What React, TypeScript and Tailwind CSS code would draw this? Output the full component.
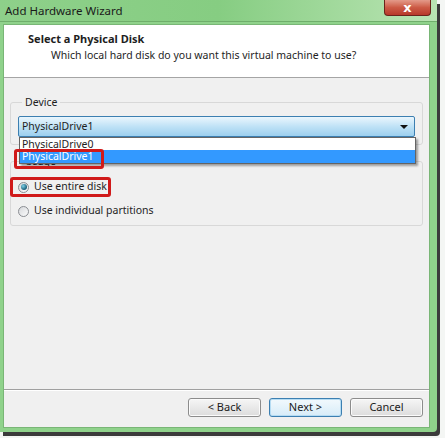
import React from "react";

function Radio({ checked, label }: { checked?: boolean; label: string }) {
  return (
    <div className="flex items-center h-[16px] gap-[5px]">
      <div className="w-[11px] h-[11px] rounded-full border border-[#8a8d92] bg-gradient-to-br from-[#d6d8db] to-[#fbfbfb] flex items-center justify-center">
        {checked && (
          <div className="w-[6px] h-[6px] rounded-full bg-[radial-gradient(circle_at_35%_35%,#7fd0e6,#1a5f7a_70%)]" />
        )}
      </div>
      <span>{label}</span>
    </div>
  );
}

function Button({ label, focused }: { label: string; focused?: boolean }) {
  return (
    <div
      className={`w-[73px] h-[19px] rounded-[3px] border flex items-center justify-center text-[11px] text-[#1b1b1b] ${
        focused
          ? "border-[#3c7fb1] bg-gradient-to-b from-[#f2f9fd] to-[#d7ecf8] shadow-[inset_0_0_0_1px_#b5dcf3]"
          : "border-[#8c8c8c] bg-gradient-to-b from-[#f6f6f6] to-[#dcdcdc] shadow-[inset_0_0_0_1px_#fbfbfb]"
      }`}
    >
      {label}
    </div>
  );
}

export default function App() {
  return (
    <div className="w-[445px] h-[438px] bg-[#f4f6f4] overflow-hidden font-['Noto_Sans',sans-serif] text-[10.5px] text-[#1e1e1e]">
      <div className="w-[437px] h-[432px] flex flex-col bg-[#8fd28b] shadow-[3px_4px_0_#3b3b3b] rounded-br-[4px]">
        {/* title bar */}
        <div className="h-[22px] flex items-start bg-gradient-to-r from-[#8ed08a] via-[#86cd82] to-[#b9e4b3] border-b border-[#6fae6b]">
          <span className="pl-[5px] pt-[3px] text-[11.5px] leading-[16px] text-[#1a1a1a]">
            Add Hardware Wizard
          </span>
          <div className="ml-auto mr-[6px] w-[47px] h-[16px] rounded-b-[4px] border border-t-0 border-[#6b231b] bg-gradient-to-b from-[#e39a8a] via-[#cc5a45] to-[#b7392a] flex items-center justify-center">
            <span className="text-white font-bold text-[13px] leading-none font-['DejaVu_Sans',sans-serif]">x</span>
          </div>
        </div>

        {/* client area */}
        <div className="mt-[2px] ml-[3px] mr-[7px] mb-[4px] flex-1 flex flex-col border border-[#79b676] relative">
          {/* header */}
          <div className="h-[53px] bg-white border-b border-[#a5a5a5] pt-[7px]">
            <div className="pl-[24px] font-bold text-[11px] leading-[14px]">Select a Physical Disk</div>
            <div className="pl-[47px] mt-[2px] leading-[14px]">
              Which local hard disk do you want this virtual machine to use?
            </div>
          </div>

          {/* body */}
          <div className="flex-1 bg-[#f0f0f0] pt-[17px] px-[6px]">
            <fieldset className="border border-[#d8d8d8] rounded-[3px] px-[7px] pt-[7px] pb-[7px]">
              <legend className="ml-[4px] px-[3px] leading-[14px]">Device</legend>
              <div className="h-[21px] rounded-[2px] border border-[#3c7fb1] bg-gradient-to-b from-[#eaf6fd] via-[#bfe2f6] to-[#9ccfee] flex items-center pl-[3px] pr-[6px]">
                <span>PhysicalDrive1</span>
                <div className="ml-auto w-0 h-0 border-l-[4px] border-r-[4px] border-t-[4px] border-l-transparent border-r-transparent border-t-[#111]" />
              </div>
            </fieldset>

            <fieldset className="mt-[9px] border border-[#d8d8d8] rounded-[3px] px-[7px] pt-[11px] pb-[6px]">
              <legend className="ml-[4px] px-[3px] leading-[14px]">Usage</legend>
              <div className="flex flex-col gap-[8px]">
                <Radio checked label="Use entire disk" />
                <Radio label="Use individual partitions" />
              </div>
            </fieldset>
          </div>

          {/* footer */}
          <div className="h-[38px] bg-[#f0f0f0] border-t border-[#a0a0a0] shadow-[inset_0_1px_0_#ffffff] flex justify-end items-start gap-[8px] pt-[8px] pr-[6px]">
            <Button label="< Back" />
            <Button label="Next >" focused />
            <Button label="Cancel" />
          </div>

          {/* open dropdown list */}
          <div className="absolute left-[15px] top-[112px] w-[397px] h-[27px] bg-white border border-[#646464] shadow-[2px_2px_2px_rgba(0,0,0,0.35)] flex flex-col">
            <div className="h-[12px] leading-[12px] pl-[2px] overflow-hidden">PhysicalDrive0</div>
            <div className="h-[13px] leading-[13px] pl-[2px] bg-[#3399ff] text-white">PhysicalDrive1</div>
          </div>

          {/* red annotation boxes */}
          <div className="absolute left-[10px] top-[124px] w-[90px] h-[20px] rounded-[3px] border-[3px] border-[#d01a1a]" />
          <div className="absolute left-[6px] top-[152px] w-[101px] h-[20px] rounded-[3px] border-[3px] border-[#d01a1a]" />
        </div>
      </div>
    </div>
  );
}
